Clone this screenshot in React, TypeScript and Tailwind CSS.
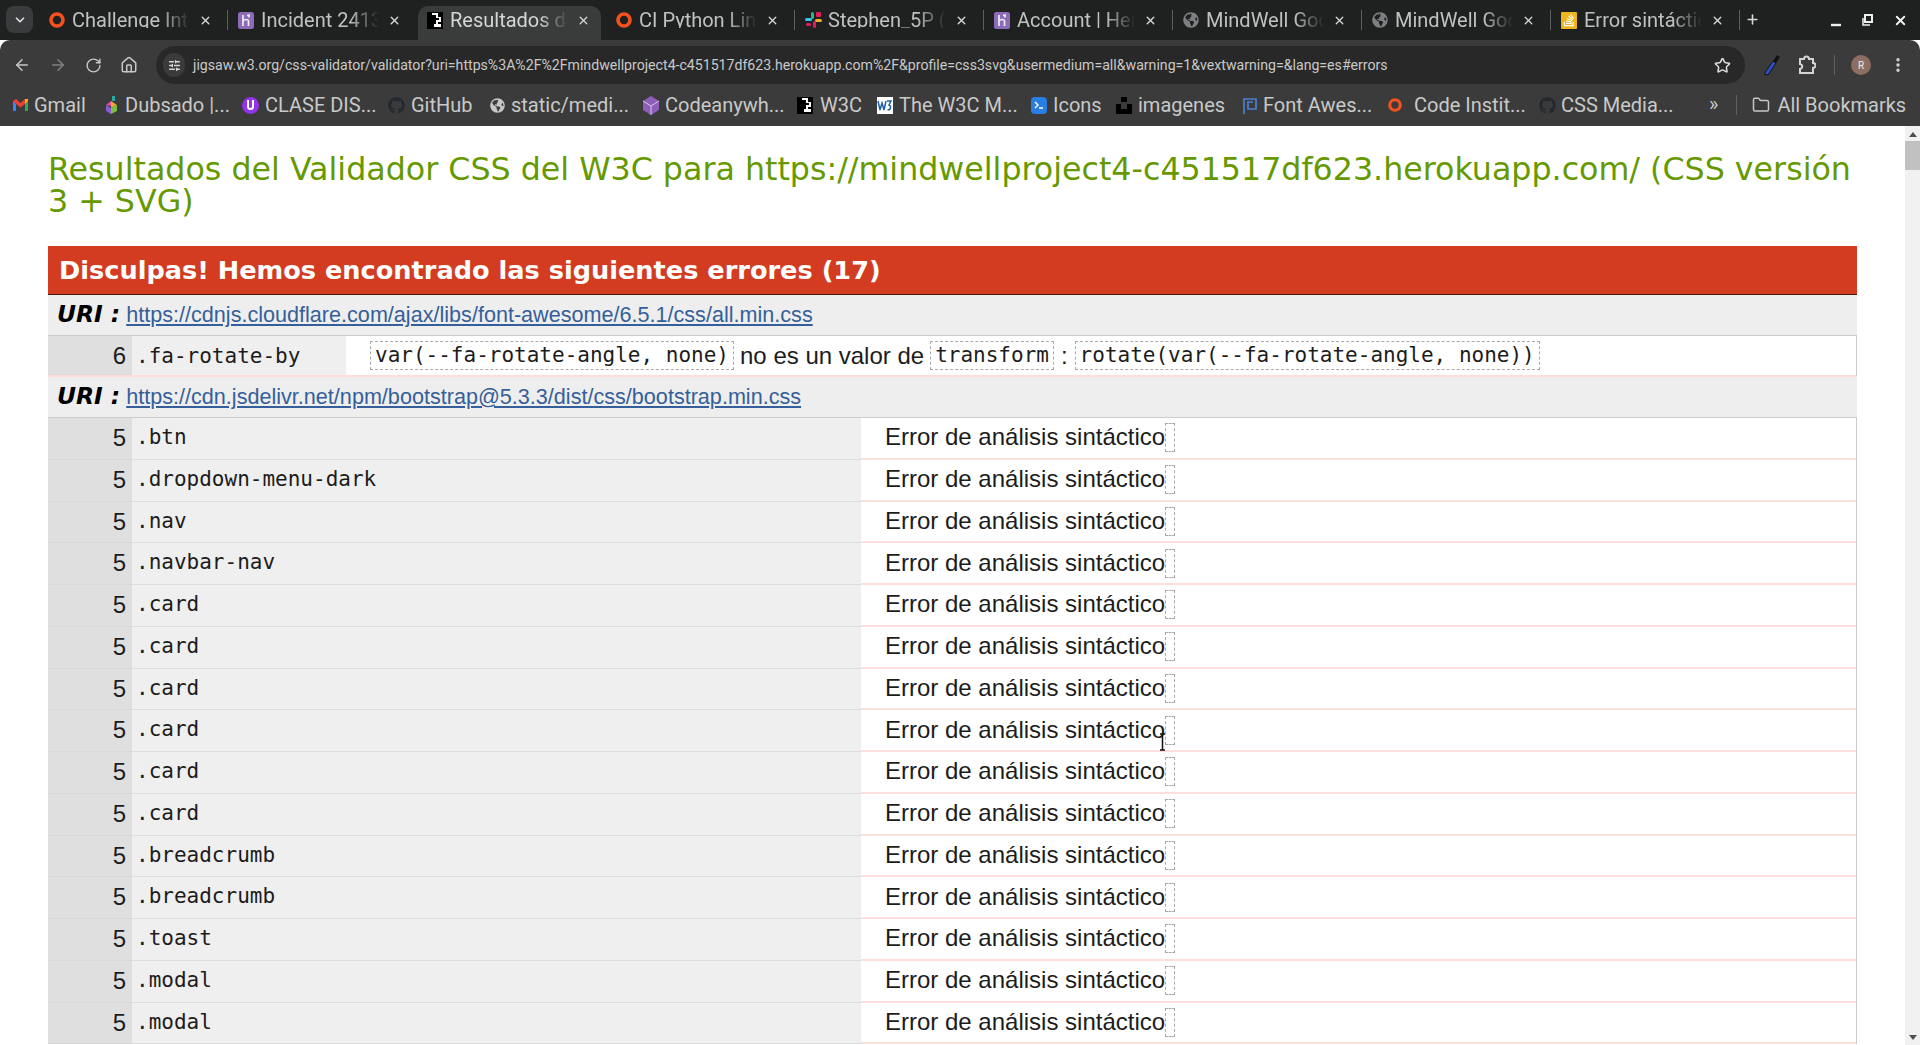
import React from "react";
import { ArrowLeft, ArrowRight, RotateCw, Home, SlidersHorizontal, Star, EllipsisVertical, Folder, ChevronDown, X, Plus } from "lucide-react";
import { FaGithub, FaGlobeAmericas, FaStackOverflow } from "react-icons/fa";

const Ring = ({ size = 16 }: { size?: number }) => (
  <svg width={size} height={size} viewBox="0 0 16 16"><circle cx="8" cy="8" r="6" fill="none" stroke="#f4511e" strokeWidth="3.6" /></svg>
);
const Heroku = () => (
  <svg width="16" height="17" viewBox="0 0 16 17"><rect width="16" height="17" rx="2.5" fill="#8c6bb8" /><path d="M5 3v11M5 9c2-2 5-2 5.500 0v5M9 3.500 11 3v2.500" fill="none" stroke="#eee" strokeWidth="1.700" /></svg>
);
const W3 = () => (
  <svg width="16" height="17" viewBox="0 0 16 17"><rect width="16" height="17" fill="#000" /><path d="M5 1h6v4h3v5h-3v2h3v3H7v-3h2V8h3V6H9V3H5z" fill="#fff" /></svg>
);
const Slack = () => (
  <svg width="17" height="18" viewBox="0 0 17 18"><rect x="0" y="7" width="7" height="3" rx="1.500" fill="#36c5f0" /><rect x="6" y="1" width="3" height="7" rx="1.500" fill="#2eb67d" /><rect x="10" y="8" width="7" height="3" rx="1.500" fill="#ecb22e" /><rect x="8" y="10" width="3" height="7" rx="1.500" fill="#e01e5a" /><rect x="11" y="1" width="5" height="5" rx="1" fill="#e01e5a" /><rect x="1" y="12" width="5" height="3" rx="1.500" fill="#e01e5a" /></svg>
);
const Stack = () => (
  <span className="w-4 h-[17px] bg-[#f0b41e] flex items-center justify-center rounded-[1px]"><FaStackOverflow size={14} color="#fff" /></span>
);
const GlobeGrey = () => <FaGlobeAmericas size={16} color="#7d8083" />;

const tabs = [
  { t: "Challenge Intro", i: <Ring /> },
  { t: "Incident 2413", i: <Heroku /> },
  { t: "Resultados del", i: <W3 />, active: true },
  { t: "CI Python Linter", i: <Ring /> },
  { t: "Stephen_5P (", i: <Slack /> },
  { t: "Account | Heroku", i: <Heroku /> },
  { t: "MindWell Google", i: <GlobeGrey /> },
  { t: "MindWell Google", i: <GlobeGrey /> },
  { t: "Error sintáctico", i: <Stack /> },
];

const Gmail = () => (
  <svg width="15" height="12" viewBox="0 0 15 12"><path d="M0 2v9a1 1 0 0 0 1 1h2V5z" fill="#4285f4" /><path d="M15 2v9a1 1 0 0 1-1 1h-2V5z" fill="#34a853" /><path d="M0 2 3 0l4.500 4L12 0l3 2-3 3-4.500 3.500L3 5z" fill="#ea4335" /><path d="M12 0l3 0v2l-3 3z" fill="#fbbc04" /></svg>
);
const Dub = () => (
  <svg width="13" height="20" viewBox="0 0 13 20"><path d="M7 1h3v5H7z" fill="#2aa8a0" /><path d="M1 10l5-4v5z" fill="#e84f9c" /><path d="M6 6l6 4-6 3z" fill="#f4a63a" /><path d="M1 10l5 3v6l-5-3z" fill="#8a5bd6" /><path d="M6 13l6-3v6l-6 3z" fill="#7ac143" /></svg>
);
const Clase = () => (
  <span className="w-[17px] h-[17px] rounded-full bg-[#9333ea] flex items-center justify-center"><span className="w-[7px] h-[10px] border-2 border-white rounded-b-[4px] border-t-0" /></span>
);
const Code = () => (
  <svg width="18" height="19" viewBox="0 0 18 19"><path d="M9 0l8 5v9l-8 5-8-5V5z" fill="#8e5fb8" /><path d="M1 5l8 5 8-5" fill="none" stroke="#d8c4e8" strokeWidth="1" /><path d="M9 10v9" stroke="#d8c4e8" strokeWidth="1" /></svg>
);
const W3M = () => (
  <svg width="16" height="17" viewBox="0 0 16 17"><rect width="16" height="17" fill="#fff" /><path d="M1 4l2 9 2-7 2 7 2-9M10 4h4l-2 4c2 0 2.500 5-1.500 5" fill="none" stroke="#1d5fa8" strokeWidth="1.500" /></svg>
);
const Icons = () => (
  <span className="w-4 h-[17px] bg-[#2a7de1] rounded-[4px] flex items-center justify-center"><svg width="10" height="8" viewBox="0 0 10 8"><path d="M1 1l3 3-3 3M5 7h4" fill="none" stroke="#fff" strokeWidth="1.400" /></svg></span>
);
const Unsplash = () => (
  <svg width="16" height="17" viewBox="0 0 16 17"><path d="M5 0h6v5H5zM0 7h5v5h6V7h5v10H0z" fill="#000" /></svg>
);
const Flag = () => (
  <svg width="14" height="17" viewBox="0 0 14 17"><path d="M1 17V2h12v10H5V5h5" fill="none" stroke="#4a80d0" strokeWidth="1.700" /></svg>
);

const marks = [
  { t: "Gmail", i: <Gmail />, w: "w-[105px]", p: "pl-[13px]", g: "gap-[6px]" },
  { t: "Dubsado |...", i: <Dub />, w: "w-[137px]", p: "pl-0", g: "gap-[7px]" },
  { t: "CLASE DIS...", i: <Clase />, w: "w-[146px]", p: "pl-0", g: "gap-[6px]" },
  { t: "GitHub", i: <FaGithub size={17} color="#24292f" />, w: "w-[102px]", p: "pl-0", g: "gap-[6px]" },
  { t: "static/medi...", i: <FaGlobeAmericas size={15} color="#c6c7c7" />, w: "w-[152px]", p: "pl-0", g: "gap-[6px]" },
  { t: "Codeanywh...", i: <Code />, w: "w-[155px]", p: "pl-0", g: "gap-[5px]" },
  { t: "W3C", i: <W3 />, w: "w-[80px]", p: "pl-0", g: "gap-[7px]" },
  { t: "The W3C M...", i: <W3M />, w: "w-[154px]", p: "pl-0", g: "gap-[6px]" },
  { t: "Icons", i: <Icons />, w: "w-[85px]", p: "pl-0", g: "gap-[6px]" },
  { t: "imagenes", i: <Unsplash />, w: "w-[127px]", p: "pl-0", g: "gap-[6px]" },
  { t: "Font Awes...", i: <Flag />, w: "w-[145px]", p: "pl-0", g: "gap-[6px]" },
  { t: "Code Instit...", i: <Ring size={14} />, w: "w-[151px]", p: "pl-0", g: "gap-[12px]" },
  { t: "CSS Media...", i: <FaGithub size={17} color="#24292f" />, w: "w-[174px]", p: "pl-0", g: "gap-[5px]" },
];

const rows = [".btn", ".dropdown-menu-dark", ".nav", ".navbar-nav", ".card", ".card", ".card", ".card", ".card", ".card", ".breadcrumb", ".breadcrumb", ".toast", ".modal", ".modal"];

const Box = ({ children }: { children?: React.ReactNode }) => (
  <span className="inline-block border border-dashed border-[#a9a9a9] h-[29px] leading-[27px] px-[4px] font-['DejaVu_Sans_Mono',monospace] text-[21px] align-middle whitespace-pre">{children}</span>
);

export default function App() {
  return (
    <div className="h-[1045px] w-[1920px] overflow-hidden flex flex-col bg-white font-['Roboto',sans-serif]">
      <div className="h-10 bg-[#1f2121] flex items-start pt-[6px] pl-[6px] shrink-0 relative">
        <div className="w-[27px] h-[27px] bg-[#3a3b3c] rounded-[8px] flex items-center justify-center mr-[7px] shrink-0">
          <ChevronDown size={14} color="#dcdcdc" strokeWidth={3} />
        </div>
        {tabs.map((x, i) => (
          <div key={i} className={x.active ? "w-[183px] mr-[6px] h-[34px] pb-[6px] pl-px flex items-center bg-[#3a3b3b] rounded-t-[10px] shrink-0" : "w-[189px] h-[34px] pb-[6px] flex items-center shrink-0"}>
            <span className={x.active ? "ml-[7px] w-[18px] flex justify-center shrink-0" : "ml-2 w-[18px] flex justify-center shrink-0"}>{x.i}</span>
            <span className={x.active ? "ml-[6px] self-start mt-[2px] h-[20px] w-[123px] overflow-hidden whitespace-nowrap text-[20px] leading-[24px] text-[#d5d6d6] [mask-image:linear-gradient(90deg,#000_72%,transparent_96%)]" : "ml-[6px] self-start mt-[2px] h-[20px] w-[123px] overflow-hidden whitespace-nowrap text-[20px] leading-[24px] text-[#bfc1c2] [mask-image:linear-gradient(90deg,#000_72%,transparent_96%)]"}>{x.t}</span>
            <X size={13} color="#d4d5d5" strokeWidth={2.500} className="ml-[4px] shrink-0" />
            {!x.active && i !== 1 && <span className="ml-[15px] w-px h-[20px] bg-[#5c5e5f] shrink-0" />}
          </div>
        ))}
        <Plus size={15} color="#d8d8d8" strokeWidth={2.500} className="ml-[4px] mt-[6px] shrink-0" />
        <div className="ml-auto flex items-center h-[28px] pr-[12px] gap-[20px]">
          <svg width="12" height="12" viewBox="0 0 12 12" className="mt-[1px]"><path d="M1 10h10" stroke="#eee" strokeWidth="2.400" /></svg>
          <svg width="11" height="12" viewBox="0 0 11 12"><rect x="3" y="1" width="7" height="7" fill="none" stroke="#eee" strokeWidth="2" /><path d="M1 4v7h7" fill="none" stroke="#eee" strokeWidth="1.500" /></svg>
          <X size={15} color="#f2f2f2" strokeWidth={3} />
        </div>
      </div>

      <div className="h-[44px] bg-[#3b3b3b] rounded-t-[10px] flex items-start pt-[6px] shrink-0">
        <div className="w-[156px] h-[38px] flex items-center pl-[13px] gap-[18px] shrink-0">
          <ArrowLeft size={18} color="#c6c7c7" strokeWidth={2} />
          <ArrowRight size={18} color="#808182" strokeWidth={2} />
          <RotateCw size={17} color="#c6c7c7" strokeWidth={2} />
          <Home size={18} color="#c6c7c7" strokeWidth={2} />
        </div>
        <div className="w-[1589px] h-[38px] bg-[#282828] rounded-full flex items-center pl-[7px] pr-[14px] shrink-0">
          <span className="w-[22px] h-[24px] bg-[#3b3b3b] rounded-full flex items-center justify-center shrink-0"><SlidersHorizontal size={13} color="#d8d8d8" strokeWidth={2.500} /></span>
          <span className="ml-2 mt-[1px] text-[14.130px] text-[#c8c9c9] whitespace-nowrap">jigsaw.w3.org/css-validator/validator?uri=https%3A%2F%2Fmindwellproject4-c451517df623.herokuapp.com%2F&amp;profile=css3svg&amp;usermedium=all&amp;warning=1&amp;vextwarning=&amp;lang=es#errors</span>
          <Star size={17} color="#dcdcdc" strokeWidth={2.200} className="ml-auto" />
        </div>
        <div className="flex-1 h-[38px] flex items-center pl-[17px]">
          <svg width="19" height="22" viewBox="0 0 19 22"><path d="M2 20 11 7l3 2-8 12z" fill="#2b4fc4" stroke="#111" strokeWidth="1" /><path d="M11 7l4-6 3 2-4 6z" fill="#111" /></svg>
          <svg width="18" height="20" viewBox="0 0 18 20" className="ml-[17px]"><path d="M2 4h4a2.500 2.500 0 0 1 5 0h4v4a2.500 2.500 0 0 1 0 5v5H2v-4a2.500 2.500 0 0 0 2-3.500A2.500 2.500 0 0 0 2 9z" fill="none" stroke="#d4d5d5" strokeWidth="2" /></svg>
          <span className="ml-[18px] w-px h-[20px] bg-[#5c5e5f]" />
          <span className="ml-[16px] w-5 h-5 rounded-full bg-[#8d6e63] text-[10px] text-[#eee] flex items-center justify-center">R</span>
          <EllipsisVertical size={18} color="#d8d8d8" strokeWidth={2.500} className="ml-[18px]" />
        </div>
      </div>

      <div className="h-[42px] bg-[#3b3b3b] flex items-center shrink-0 text-[20px] text-[#c8c9c9]">
        {marks.map((m, i) => (
          <div key={i} className={`flex items-center ${m.w} ${m.p} ${m.g} shrink-0 whitespace-nowrap`}>
            <span className="shrink-0 flex items-center">{m.i}</span>
            <span>{m.t}</span>
          </div>
        ))}
        <span className="text-[20px] -mt-[2px] ml-[-4px]">»</span>
        <span className="ml-[18px] w-px h-[20px] bg-[#5c5e5f]" />
        <Folder size={18} color="#c6c7c7" strokeWidth={2} className="ml-[15px]" />
        <span className="ml-[7px] whitespace-nowrap">All Bookmarks</span>
      </div>

      <div className="flex-1 flex min-h-0">
        <div className="flex-1 min-w-0 overflow-hidden px-[48px]">
          <h2 className="pt-[27px] text-[31.700px] leading-[32px] font-normal text-[#669900] font-['DejaVu_Sans',sans-serif]">Resultados del Validador CSS del W3C para https://mindwellproject4-c451517df623.herokuapp.com/ (CSS versión 3 + SVG)</h2>
          <div className="mt-[29px] h-[49px] bg-[#d33c21] border-b border-[#4a1a10] flex items-center pl-[11px] text-[25.600px] font-bold text-white font-['DejaVu_Sans',sans-serif]">Disculpas! Hemos encontrado las siguientes errores (17)</div>

          <Uri href="https://cdnjs.cloudflare.com/ajax/libs/font-awesome/6.5.1/css/all.min.css" />
          <div className="h-[41px] flex border-b-2 border-[#ffdcdc] border-r border-r-[#cccccc] font-['Liberation_Sans',sans-serif] text-[24px] text-[#1c1c1c]">
            <div className="w-[84px] bg-[#dfdfdf] text-right pr-[6px] leading-[40px] border-b border-[#dddddd]">6</div>
            <div className="w-[214px] bg-[#efefef] pl-[4px] leading-[40px] font-['DejaVu_Sans_Mono',monospace] text-[21px]">.fa-rotate-by</div>
            <div className="flex-1 bg-white pl-[24px] flex items-center">
              <Box>var(--fa-rotate-angle, none)</Box>
              <span className="mx-[6px]">no es un valor de</span>
              <Box>transform</Box>
              <span className="mx-[7px]">:</span>
              <Box>rotate(var(--fa-rotate-angle, none))</Box>
            </div>
          </div>
          <Uri href="https://cdn.jsdelivr.net/npm/bootstrap@5.3.3/dist/css/bootstrap.min.css" />
          {rows.map((r, i) => (
            <div key={i} className="h-[41.750px] flex border-r border-[#cccccc] font-['Liberation_Sans',sans-serif] text-[24px] text-[#1c1c1c]">
              <div className="w-[84px] bg-[#dfdfdf] text-right pr-[6px] leading-[39px] border-b border-[#d9d9d9]">5</div>
              <div className="w-[729px] bg-[#efefef] pl-[4px] leading-[39px] border-b border-[#dddddd] font-['DejaVu_Sans_Mono',monospace] text-[21px]">{r}</div>
              <div className="flex-1 bg-white pl-[24px] flex items-center border-b-2 border-[#ffdede] relative">
                <span className="whitespace-nowrap -mt-px">Error de análisis sintáctico</span>
                <Box />
                {i === 7 && (
                  <svg className="absolute left-[298px] top-[23px]" width="7" height="18" viewBox="0 0 7 18"><path d="M1 1h5M3.500 1v16M1 17h5" fill="none" stroke="#111" strokeWidth="1.500" /></svg>
                )}
              </div>
            </div>
          ))}
        </div>
        <div className="w-[15px] shrink-0 bg-[#f1f1f1] flex flex-col items-center">
          <span className="mt-[6px] w-0 h-0 border-x-[4px] border-x-transparent border-b-[5px] border-b-[#505050]" />
          <span className="mt-[4px] w-[15px] h-[29px] bg-[#c1c1c1]" />
          <span className="mt-auto mb-[5px] w-0 h-0 border-x-[4px] border-x-transparent border-t-[5px] border-t-[#505050]" />
        </div>
      </div>
    </div>
  );
}

function Uri({ href }: { href: string }) {
  return (
    <div className="h-[41px] bg-[#eeeeee] border-b border-[#cccccc] flex items-center pl-[9px] font-['Liberation_Sans',sans-serif] text-[21.600px]">
      <span className="font-['DejaVu_Sans',sans-serif] font-bold italic text-[23.400px] text-black mr-[6px]">URI :</span>
      <span className="text-[#355f9a] underline whitespace-nowrap">{href}</span>
    </div>
  );
}
